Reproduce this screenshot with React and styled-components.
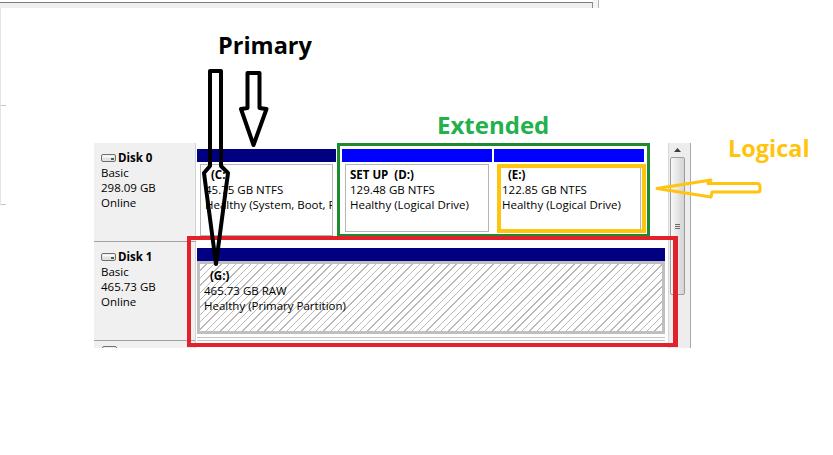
import React from "react";
import styled, { createGlobalStyle } from "styled-components";

const GlobalStyle = createGlobalStyle`
  html, body { margin: 0; padding: 0; background: #ffffff; }
  body { font-family: "Open Sans", "Liberation Sans", sans-serif; color: #000; }
  * { box-sizing: border-box; }
`;

const Page = styled.div`
  position: relative;
  width: 833px;
  height: 455px;
  overflow: hidden;
  background: #fff;
  display: flex;
  flex-direction: column;
`;

const TopStrip = styled.div`
  display: flex;
  align-items: flex-start;
  height: 8px;
  flex: none;
`;

const StripBar = styled.div`
  width: 593px;
  height: 6px;
  margin-top: 2px;
  background: #efefef;
  border-top: 1px solid #7c7c7c;
  border-right: 1px solid #8c8c8c;
`;

const StripEnd = styled.div`
  width: 6px;
  height: 8px;
  background: #f4f4f4;
  border-right: 1px solid #b2b2b2;
`;

const Workspace = styled.div`
  display: flex;
  align-items: flex-start;
`;

const LeftEdge = styled.div`
  width: 6px;
  flex: none;
  border-left: 1px solid #e4e4e4;
  display: flex;
  flex-direction: column;
`;

const EdgeSeg = styled.div`
  height: ${(p) => p.$h}px;
  border-bottom: 1px solid #c6c6c6;
`;

const Panel = styled.div`
  margin-left: 88px;
  margin-top: 135px;
  width: 597px;
  height: 205px;
  display: flex;
  flex: none;
`;

const DiskList = styled.div`
  width: 575px;
  display: flex;
  flex-direction: column;
`;

const DiskRow = styled.div`
  display: flex;
  height: ${(p) => p.$h}px;
  flex: none;
  overflow: hidden;
`;

const DiskLabel = styled.div`
  width: 102px;
  flex: none;
  background: #f0f0f0;
  border-right: 1px solid #d2d2d2;
  border-bottom: ${(p) => (p.$peek ? "none" : "1px solid #a2a2a2")};
  padding: ${(p) => (p.$peek ? "4px 0 0 8px" : "7px 0 0 7px")};
  font-size: 11.5px;
  line-height: 15px;
  overflow: hidden;
  white-space: nowrap;
`;

const DiskTitle = styled.div`
  display: flex;
  align-items: center;
  gap: 2px;
  font-weight: 700;
`;

const Partitions = styled.div`
  flex: 1;
  display: flex;
  align-items: flex-start;
  background: #fff;
  border-right: 1px solid #d8d8d8;
`;

const Cell = styled.div`
  display: flex;
  flex-direction: column;
  width: ${(p) => p.$w}px;
  flex: none;
  align-self: stretch;
  padding: ${(p) => p.$pad || "0"};
`;

const Header = styled.div`
  height: 13px;
  flex: none;
  background: ${(p) => p.$color};
`;

const Volume = styled.div`
  flex: 1;
  margin: 2px 3px 2px;
  border: 1px solid #b6b6b6;
  background: #fff;
  padding: 2px 0 0 4px;
  font-size: 11.5px;
  line-height: 15px;
  white-space: nowrap;
  overflow: hidden;
`;

const RawVolume = styled.div`
  flex: 1;
  margin-bottom: 3px;
  border: 3px solid #bfbfbf;
  background: repeating-linear-gradient(
    135deg,
    #ffffff 0px,
    #ffffff 4.2px,
    #b9b9b9 4.2px,
    #b9b9b9 5.2px
  );
  padding: 4px 0 0 4px;
  font-size: 11.5px;
  line-height: 15px;
  white-space: nowrap;
  overflow: hidden;
`;

const CellFoot = styled.div`
  height: 4px;
  flex: none;
  border-top: 1px solid #c4c4c4;
  border-bottom: 1px solid #c4c4c4;
`;

const VolName = styled.div`
  font-weight: 700;
`;

const ExtendedGroup = styled.div`
  display: flex;
  gap: 2px;
  height: 94px;
  flex: none;
  border: 3px solid #1d8a2d;
  padding: 3px 3px 0 2px;
`;

const ScrollTrack = styled.div`
  width: 22px;
  flex: none;
  align-self: stretch;
  background: #ededed;
  border-right: 1px solid #a9a9a9;
  display: flex;
  flex-direction: column;
  align-items: flex-start;
  padding-left: 1px;
`;

const ScrollArrow = styled.div`
  width: 15px;
  height: 14px;
  display: flex;
  align-items: center;
  justify-content: center;
`;

const Thumb = styled.div`
  width: 15px;
  height: 138px;
  border: 1px solid #9d9d9d;
  border-radius: 2px;
  background: linear-gradient(to right, #f8f8f8, #e4e4e4 55%, #d4d4d4);
  display: flex;
  align-items: center;
  justify-content: center;
`;

const Callout = styled.div`
  position: absolute;
  left: ${(p) => p.$x}px;
  top: ${(p) => p.$y}px;
  font-family: "Open Sans", "Liberation Sans", sans-serif;
  font-weight: 700;
  font-size: ${(p) => p.$size}px;
  line-height: 24px;
  color: ${(p) => p.$color};
  white-space: nowrap;
`;

const MarkBox = styled.div`
  position: absolute;
  left: ${(p) => p.$x}px;
  top: ${(p) => p.$y}px;
  width: ${(p) => p.$w}px;
  height: ${(p) => p.$h}px;
  border: 4px solid ${(p) => p.$color};
  border-right-width: ${(p) => p.$rw || 4}px;
`;

const ArrowLayer = styled.svg`
  position: absolute;
  left: 0;
  top: 0;
  pointer-events: none;
`;

const DiskIcon = () => (
  <svg width="15" height="9" viewBox="0 0 15 9">
    <rect x="0.5" y="1.5" width="14" height="7" rx="1.5" fill="#e2e2e2" stroke="#707070" />
    <rect x="1.5" y="2.5" width="12" height="2" fill="#fafafa" />
    <rect x="10" y="5" width="3" height="2" fill="#3a6d3a" />
  </svg>
);

const disks = [
  { name: "Disk 0", type: "Basic", size: "298.09 GB", status: "Online" },
  { name: "Disk 1", type: "Basic", size: "465.73 GB", status: "Online" },
];

const Label = ({ disk }) => (
  <DiskLabel>
    <DiskTitle>
      <DiskIcon />
      <span>{disk.name}</span>
    </DiskTitle>
    <div>{disk.type}</div>
    <div>{disk.size}</div>
    <div>{disk.status}</div>
  </DiskLabel>
);

export default function App() {
  return (
    <>
      <GlobalStyle />
      <Page>
        <TopStrip>
          <StripBar />
          <StripEnd />
        </TopStrip>
        <Workspace>
          <LeftEdge>
            <EdgeSeg $h={98} />
            <EdgeSeg $h={99} />
          </LeftEdge>
          <Panel>
            <DiskList>
              <DiskRow $h={99}>
                <Label disk={disks[0]} />
                <Partitions>
                  <Cell $w={141} $pad="6px 1px 4px 1px">
                    <Header $color="#000080" />
                    <Volume>
                      <VolName>{"\u00a0\u00a0(C:)"}</VolName>
                      <div>45.75 GB NTFS</div>
                      <div>Healthy (System, Boot, Page File, Active, Crash Dump, Primary Partition)</div>
                    </Volume>
                  </Cell>
                  <ExtendedGroup>
                    <Cell $w={150}>
                      <Header $color="#0000ff" />
                      <Volume>
                        <VolName>{"SET UP\u00a0\u00a0(D:)"}</VolName>
                        <div>129.48 GB NTFS</div>
                        <div>Healthy (Logical Drive)</div>
                      </Volume>
                    </Cell>
                    <Cell $w={150}>
                      <Header $color="#0000ff" />
                      <Volume>
                        <VolName>{"\u00a0\u00a0(E:)"}</VolName>
                        <div>122.85 GB NTFS</div>
                        <div>Healthy (Logical Drive)</div>
                      </Volume>
                    </Cell>
                  </ExtendedGroup>
                </Partitions>
              </DiskRow>
              <DiskRow $h={99}>
                <Label disk={disks[1]} />
                <Partitions>
                  <Cell $w={472} $pad="6px 3px 0 1px">
                    <Header $color="#000080" />
                    <RawVolume>
                      <VolName>{"\u00a0\u00a0(G:)"}</VolName>
                      <div>465.73 GB RAW</div>
                      <div>Healthy (Primary Partition)</div>
                    </RawVolume>
                    <CellFoot />
                  </Cell>
                </Partitions>
              </DiskRow>
              <DiskRow $h={7}>
                <DiskLabel $peek>
                  <DiskTitle>
                    <DiskIcon />
                  </DiskTitle>
                </DiskLabel>
                <Partitions />
              </DiskRow>
            </DiskList>
            <ScrollTrack>
              <ScrollArrow>
                <svg width="7" height="4" viewBox="0 0 7 4">
                  <path d="M0 4 L3.5 0 L7 4 Z" fill="#3c3c3c" />
                </svg>
              </ScrollArrow>
              <Thumb>
                <svg width="7" height="7" viewBox="0 0 7 7">
                  <path d="M1 1.5 H6 M1 3.5 H6 M1 5.5 H6" stroke="#6c6c6c" strokeWidth="1" />
                </svg>
              </Thumb>
            </ScrollTrack>
          </Panel>
        </Workspace>

        <MarkBox $x={497} $y={164} $w={149} $h={69} $color="#ffc40e" />
        <MarkBox $x={187} $y={236} $w={491} $h={111} $rw={5} $color="#e3212b" />

        <Callout $x={218} $y={33} $size={23.5} $color="#000000">Primary</Callout>
        <Callout $x={437} $y={113} $size={24} $color="#22b14c">Extended</Callout>
        <Callout $x={728} $y={136} $size={23.5} $color="#ffc40e">Logical</Callout>

        <ArrowLayer width="833" height="455" viewBox="0 0 833 455">
          <path
            d="M210 166 L210 71 L221 71 L221 166 L228 173 L216 264 L204 173 Z"
            fill="none"
            stroke="#000"
            strokeWidth="4"
            strokeLinejoin="round"
          />
          <path
            d="M247.5 108 L247.5 73 L259.5 73 L259.5 108 L266.5 109 L253.5 145 L241 109 Z"
            fill="none"
            stroke="#000"
            strokeWidth="4"
            strokeLinejoin="round"
          />
          <path
            d="M657 188.5 L711 180 L708 183.5 L758 183.5 Q760 184 760 187.5 L760 190 Q760 192 758 192 L712 192 L711 197 Z"
            fill="none"
            stroke="#ffc40e"
            strokeWidth="3"
            strokeLinejoin="round"
          />
        </ArrowLayer>
      </Page>
    </>
  );
}
